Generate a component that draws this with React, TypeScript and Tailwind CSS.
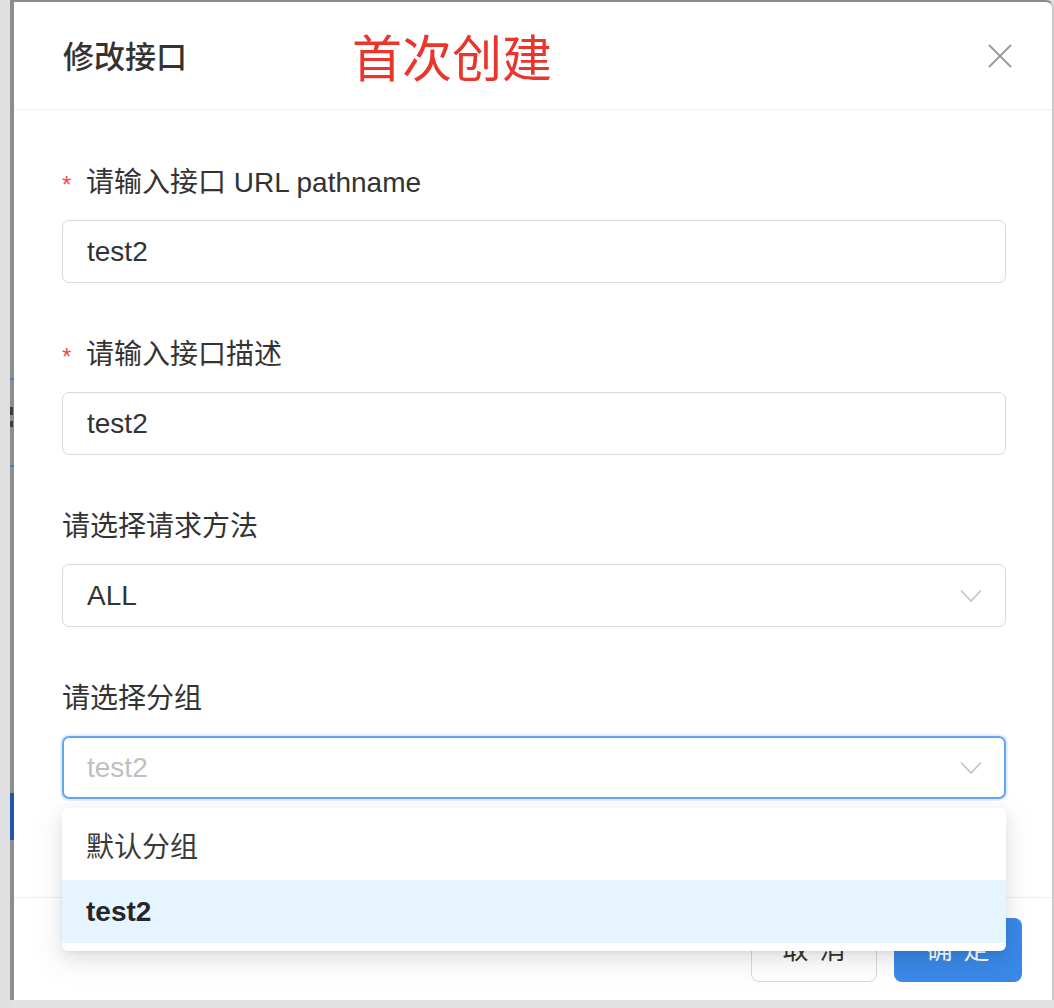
import React from 'react';

const fontStack = "font-['Liberation_Sans','Noto_Sans_CJK_SC',sans-serif]";

const Chevron: React.FC = () => (
  <svg width="22" height="14" viewBox="0 0 22 14" fill="none">
    <polyline points="1,1.5 11,12 21,1.5" stroke="#c4c4c4" strokeWidth="1.6" />
  </svg>
);

const Field: React.FC<{ label: string; required?: boolean; children: React.ReactNode }> = ({
  label,
  required,
  children,
}) => (
  <div className="flex flex-col">
    <div className="h-[32px] flex items-center text-[28px] leading-[32px] text-[#333]">
      {required && <span className="w-[24px] text-[24px] text-[#f04a4a] pt-[4px]">*</span>}
      <span>{label}</span>
    </div>
    <div className="mt-[21px] relative">{children}</div>
  </div>
);

const App: React.FC = () => {
  return (
    <div className={`w-[1054px] h-[1008px] bg-[#e2e2e5] flex overflow-hidden ${fontStack}`}>
      <div className="w-[10px] bg-[#e0e0e3]" />

      {/* edge of the page behind the modal */}
      <div className="w-[4px] h-[1000px] flex flex-col bg-[#8d8d8d]">
        <div className="h-[378px]" />
        <div className="h-[2px] bg-[#3f7fcf]" />
        <div className="h-[27px]" />
        <div className="h-[8px] bg-[#3a3a3a] w-[3px]" />
        <div className="h-[6px]" />
        <div className="h-[6px] bg-[#3a3a3a] w-[3px]" />
        <div className="h-[38px]" />
        <div className="h-[2px] bg-[#3f7fcf]" />
        <div className="h-[326px]" />
        <div className="h-[47px] bg-[#1f56a3]" />
      </div>

      <div className="w-[1040px] h-[1000px] bg-white border-t-2 border-r-2 border-t-[#8d8d8d] border-r-[#c9c9c9] rounded-tr-[8px] flex flex-col">
        {/* header */}
        <div className="h-[108px] shrink-0 border-b border-[#efefef] flex items-center pl-[49px] pr-[40px]">
          <span className="mt-[6px] text-[31px] font-medium text-[#333]">修改接口</span>
          <span className="ml-[165px] mt-[9px] text-[50px] text-[#e9352b] leading-none">首次创建</span>
          <div className="flex-1" />
          <svg width="24" height="24" viewBox="0 0 24 24" fill="none">
            <line x1="1" y1="1" x2="23" y2="23" stroke="#9a9a9a" strokeWidth="2" />
            <line x1="23" y1="1" x2="1" y2="23" stroke="#9a9a9a" strokeWidth="2" />
          </svg>
        </div>

        {/* body */}
        <div className="h-[787px] shrink-0 pl-[48px] pr-[46px] pt-[57px] flex flex-col gap-[56px]">
          <Field label="请输入接口 URL pathname" required>
            <div className="h-[63px] border border-[#d9d9d9] rounded-[7px] flex items-center px-[24px] text-[28px] text-[#333]">
              test2
            </div>
          </Field>

          <Field label="请输入接口描述" required>
            <div className="h-[63px] border border-[#d9d9d9] rounded-[7px] flex items-center px-[24px] text-[28px] text-[#333]">
              test2
            </div>
          </Field>

          <Field label="请选择请求方法">
            <div className="h-[63px] border border-[#d9d9d9] rounded-[7px] flex items-center justify-between pl-[24px] pr-[23px] text-[28px] text-[#333]">
              <span>ALL</span>
              <Chevron />
            </div>
          </Field>

          <Field label="请选择分组">
            <div className="h-[63px] border-2 border-[#62a5f1] rounded-[7px] shadow-[0_0_0_2px_rgba(98,165,241,0.18)] flex items-center justify-between pl-[23px] pr-[22px] text-[28px] text-[#bfbfbf]">
              <span>test2</span>
              <Chevron />
            </div>
            <div className="absolute z-10 left-0 right-0 top-[calc(100%+9px)] bg-white rounded-[6px] py-[8px] shadow-[0_6px_16px_0_rgba(0,0,0,0.08),0_3px_6px_-4px_rgba(0,0,0,0.12),0_9px_28px_8px_rgba(0,0,0,0.05)]">
              <div className="h-[64px] flex items-center px-[24px] text-[28px] text-[#3a3a3a]">默认分组</div>
              <div className="h-[63px] flex items-center px-[24px] text-[28px] font-bold text-[#262626] bg-[#e6f4ff]">
                test2
              </div>
            </div>
          </Field>
        </div>

        {/* footer */}
        <div className="h-[103px] shrink-0 border-t border-[#efefef] flex justify-end items-start gap-[17px] pt-[20px] pr-[30px]">
          <button className="w-[126px] h-[64px] border border-[#d9d9d9] rounded-[8px] bg-white flex items-center justify-center gap-[11px] text-[26px] text-[#333]">
            <span>取</span>
            <span>消</span>
          </button>
          <button className="w-[128px] h-[64px] rounded-[8px] bg-[#3a89e8] flex items-center justify-center gap-[11px] text-[26px] text-white">
            <span>确</span>
            <span>定</span>
          </button>
        </div>
      </div>
    </div>
  );
};

export default App;
